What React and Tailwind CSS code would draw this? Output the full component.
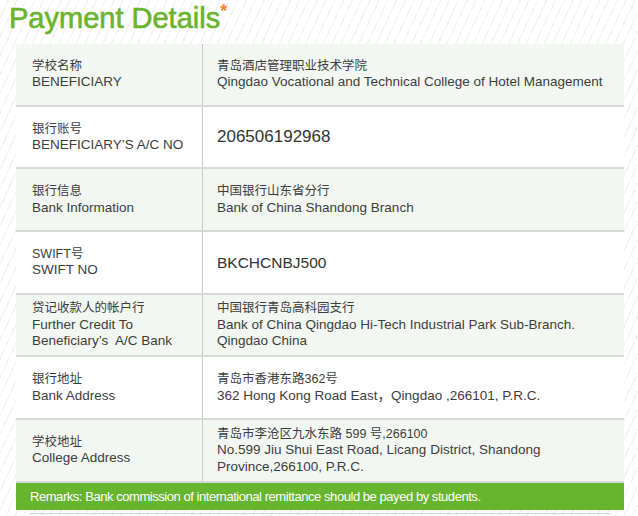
const rows = [
  {
    label: ["学校名称", "BENEFICIARY"],
    value: ["青岛酒店管理职业技术学院", "Qingdao Vocational and Technical College of Hotel Management"],
  },
  { label: ["银行账号", "BENEFICIARY’S A/C NO"], big: "206506192968" },
  { label: ["银行信息", "Bank Information"], value: ["中国银行山东省分行", "Bank of China Shandong Branch"] },
  { label: ["SWIFT号", "SWIFT NO"], big: "BKCHCNBJ500" },
  {
    label: ["贷记收款人的帐户行", "Further Credit To", "Beneficiary’s  A/C Bank"],
    value: ["中国银行青岛高科园支行", "Bank of China Qingdao Hi-Tech Industrial Park Sub-Branch.", "Qingdao China"],
  },
  { label: ["银行地址", "Bank Address"], value: ["青岛市香港东路362号", "362 Hong Kong Road East，Qingdao ,266101, P.R.C."] },
  {
    label: ["学校地址", "College Address"],
    value: ["青岛市李沧区九水东路 599 号,266100", "No.599 Jiu Shui East Road, Licang District, Shandong", "Province,266100, P.R.C."],
  },
];

function Lines({ lines }) {
  return (
    <div className="text-[13.5px] leading-[16.5px] text-[#3d3d3d] whitespace-pre">
      {lines.map((l, i) => (
        <div key={i} className={/[\u4e00-\u9fff]/.test(l) ? "text-[12.5px]" : ""}>
          {l}
        </div>
      ))}
    </div>
  );
}

export default function App() {
  return (
    <div className="w-[638px] h-[516px] overflow-hidden font-['Liberation_Sans','Noto_Sans_CJK_SC',sans-serif] bg-[repeating-linear-gradient(115deg,#ffffff_0px,#ffffff_7px,#efefef_7px,#efefef_8px)]">
      {/* 标题 */}
      <div className="pl-[9px] pt-[1px] h-[44px] flex items-start">
        <h1 className="text-[29px] leading-[34px] text-[#69b42c] [-webkit-text-stroke:0.6px_#69b42c]">Payment Details</h1>
        <span className="text-[#f0862a] text-[18px] leading-[18px] mt-[1px] font-bold">*</span>
      </div>

      {/* 表格 */}
      <div className="ml-[16px] w-[608px]">
        {rows.map((r, i) => (
          <div
            key={i}
            className={`flex h-[62.7px] border-b-2 border-[#d6d9d6] ${i % 2 === 0 ? "bg-[#f2f7f1]" : "bg-white"}`}
          >
            <div className="w-[187px] shrink-0 border-r border-[#c9c9c9] pl-[16px] flex items-center">
              <Lines lines={r.label} />
            </div>
            <div className="flex-1 pl-[14px] flex items-center">
              {r.big ? (
                <span className={`${i === 1 ? "text-[17px]" : "text-[15.5px]"} text-[#333]`}>{r.big}</span>
              ) : (
                <Lines lines={r.value} />
              )}
            </div>
          </div>
        ))}

        {/* 备注 */}
        <div className="h-[27px] bg-[#67b42e] flex items-center pl-[14px] text-white text-[13px] tracking-[-0.45px]">
          Remarks: Bank commission of international remittance should be payed by students.
        </div>
        <div className="mt-[3px] ml-[14px] w-[580px] border-t border-[#c9d6dc]" />
      </div>
    </div>
  );
}
